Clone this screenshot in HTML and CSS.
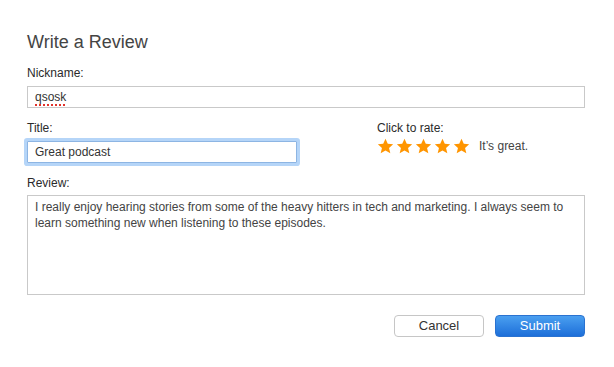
FILE: index.html
```html
<!DOCTYPE html>
<html lang="en">
<head>
<meta charset="utf-8">
<title>Write a Review</title>
<link rel="stylesheet" href="styles.css">
</head>
<body>
<form class="dialog">
  <h1 class="heading">Write a Review</h1>
  <div class="field">
    <label class="label" for="nick">Nickname:</label>
    <div class="input input-nick" id="nick" contenteditable="true" spellcheck="false"><span class="misspelled">qsosk</span></div>
  </div>
  <div class="row">
    <div class="field field-title">
      <label class="label" for="title">Title:</label>
      <input class="input input-focus" id="title" type="text" value="Great podcast" spellcheck="false">
    </div>
    <div class="rate">
      <div class="label">Click to rate:</div>
      <div class="stars">
        <svg class="star" viewBox="0 0 24 24"><path d="M12 1.2l3.2 7 7.6.7-5.8 5.1 1.8 7.6L12 17.6l-6.8 4 1.8-7.6-5.8-5.1 7.6-.7z"/></svg>
        <svg class="star" viewBox="0 0 24 24"><path d="M12 1.2l3.2 7 7.6.7-5.8 5.1 1.8 7.6L12 17.6l-6.8 4 1.8-7.6-5.8-5.1 7.6-.7z"/></svg>
        <svg class="star" viewBox="0 0 24 24"><path d="M12 1.2l3.2 7 7.6.7-5.8 5.1 1.8 7.6L12 17.6l-6.8 4 1.8-7.6-5.8-5.1 7.6-.7z"/></svg>
        <svg class="star" viewBox="0 0 24 24"><path d="M12 1.2l3.2 7 7.6.7-5.8 5.1 1.8 7.6L12 17.6l-6.8 4 1.8-7.6-5.8-5.1 7.6-.7z"/></svg>
        <svg class="star" viewBox="0 0 24 24"><path d="M12 1.2l3.2 7 7.6.7-5.8 5.1 1.8 7.6L12 17.6l-6.8 4 1.8-7.6-5.8-5.1 7.6-.7z"/></svg>
        <span class="rate-text">It’s great.</span>
      </div>
    </div>
  </div>
  <div class="field field-review">
    <label class="label label-review" for="review">Review:</label>
    <textarea class="textarea" id="review" spellcheck="false">I really enjoy hearing stories from some of the heavy hitters in tech and marketing. I always seem to learn something new when listening to these episodes.</textarea>
  </div>
  <div class="actions">
    <button class="btn btn-cancel" type="button">Cancel</button>
    <button class="btn btn-submit" type="button">Submit</button>
  </div>
</form>
</body>
</html>
```
FILE: styles.css
```css
* { box-sizing: border-box; }
html, body { margin: 0; background: #fff; }
body {
  font-family: "Liberation Sans", Arial, sans-serif;
  font-size: 12px;
  color: #333;
}
.dialog {
  width: 614px;
  padding: 0 29px 0 27px;
}
.heading {
  margin: 31px 0 0;
  font-size: 18px;
  line-height: 22px;
  font-weight: normal;
  color: #444;
}
.field { display: flex; flex-direction: column; margin-top: 13px; }
.label {
  display: block;
  font-size: 12px;
  line-height: 14px;
  color: #2a2a2a;
  margin-bottom: 6px;
}
.label-review { margin-bottom: 5px; }
.input {
  height: 22px;
  border: 1px solid #c9c9c9;
  border-radius: 0;
  padding: 0 7px;
  font-family: "Liberation Sans", Arial, sans-serif;
  font-size: 12px;
  color: #333;
  background: #fff;
  outline: none;
}
.input-nick {
  line-height: 20px;
  white-space: nowrap;
  overflow: hidden;
}
.misspelled {
  text-decoration: underline dotted #e0322b;
  text-underline-offset: 3px;
  text-decoration-thickness: 2px;
}
.input-focus {
  border-color: #8db5e3;
  border-radius: 1px;
  box-shadow: 0 0 0 3px #b5d5f8;
}
.row { display: flex; margin-top: 13px; }
.row .field { margin-top: 0; }
.field-title { width: 270px; }
.rate { margin-left: 80px; }
.rate .label { margin-bottom: 3px; }
.stars { display: flex; align-items: center; height: 16px; }
.star { width: 17px; height: 17px; fill: #ff9500; margin-right: 2px; flex: none; }
.rate-text { margin-left: 7px; color: #444; font-size: 12px; line-height: 14px; }
.textarea {
  height: 100px;
  border: 1px solid #c9c9c9;
  padding: 3px 7px;
  font-family: "Liberation Sans", Arial, sans-serif;
  font-size: 12px;
  line-height: 16px;
  color: #444;
  resize: none;
  outline: none;
  overflow: hidden;
}
.actions {
  display: flex;
  justify-content: flex-end;
  gap: 11px;
  margin-top: 20px;
}
.btn {
  width: 90px;
  height: 22px;
  border-radius: 4px;
  font-family: "Liberation Sans", Arial, sans-serif;
  font-size: 13px;
  padding: 0;
  line-height: 20px;
}
.btn-cancel {
  background: #fff;
  border: 1px solid #c6c6c6;
  color: #333;
}
.btn-submit {
  background: linear-gradient(#4a9ff0, #1d6fd9);
  border: 1px solid #2a72d0;
  color: #fff;
}
```
